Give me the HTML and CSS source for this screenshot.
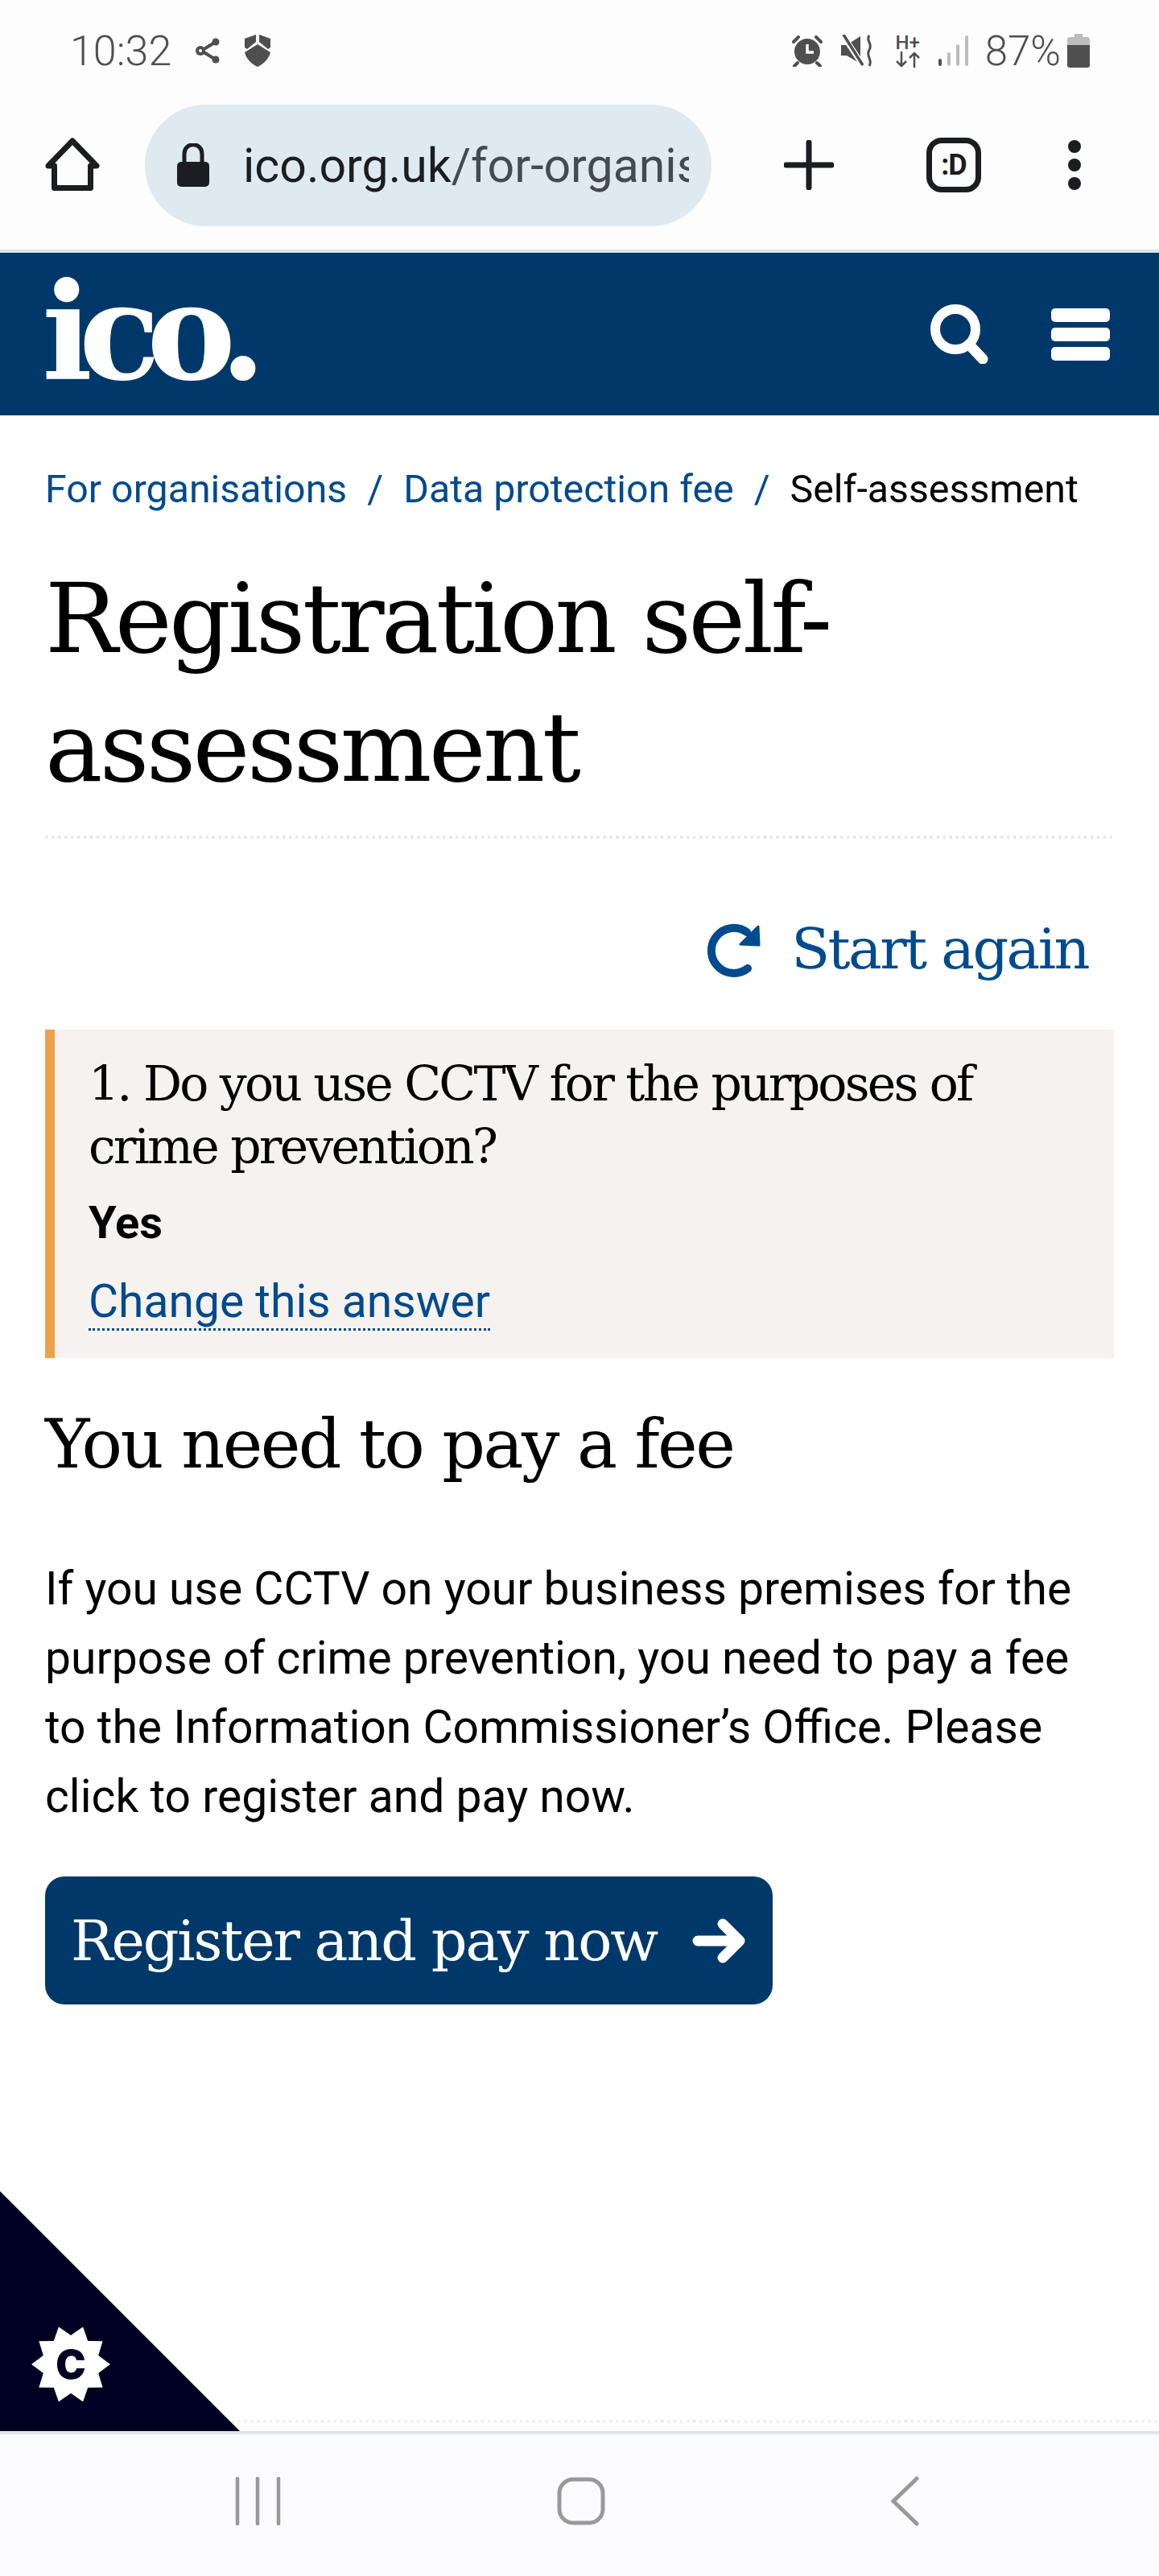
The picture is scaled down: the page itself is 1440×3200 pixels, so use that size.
FILE: index.html
```html
<!DOCTYPE html>
<html lang="en">
<head>
<meta charset="UTF-8" />
<title>Registration self-assessment</title>
<link rel="stylesheet" href="styles.css">
</head>
<body>

<div class="status-bar">
  <div class="status-left">
    <span class="status-time">10:32</span>
    <svg class="ic-share" width="32" height="32" viewBox="0 0 32 32">
      <path d="M8 16 L26 5 M8 16 L26 27" stroke="#4f4f4f" stroke-width="4" fill="none"/>
      <circle cx="7" cy="16" r="6" fill="#4f4f4f"/><circle cx="7" cy="16" r="2" fill="#fdfdfe"/>
      <circle cx="26" cy="5" r="4.5" fill="#4f4f4f"/><circle cx="26" cy="27" r="4.5" fill="#4f4f4f"/>
    </svg>
    <svg class="ic-shield" width="32" height="40" viewBox="0 0 32 40">
      <path d="M0 5 L14 0 V9 L3 18 L0 16 Z M18 0 L32 5 V16 L29 18 L18 9 Z M16 12 L32 22 C30 30 24 36 16 40 C8 36 2 30 0 22 Z" fill="#4f4f4f"/>
    </svg>
  </div>
  <div class="status-right">
    <svg class="ic-alarm" width="38" height="40" viewBox="0 0 38 40">
      <circle cx="19" cy="21" r="16" fill="#4f4f4f"/>
      <path d="M19 12 V22 H27" stroke="#fdfdfe" stroke-width="3.5" fill="none"/>
      <path d="M2 9 L8 3 M36 9 L30 3 M7 35 L3 39 M31 35 L35 39" stroke="#4f4f4f" stroke-width="4" stroke-linecap="round"/>
    </svg>
    <svg class="ic-mute" width="40" height="40" viewBox="0 0 40 40">
      <path d="M0 13 H7 L24 2 V36 L7 26 H0 Z" fill="#4f4f4f"/>
      <path d="M3 2 L27 38" stroke="#fdfdfe" stroke-width="7"/>
      <path d="M3 0 L27 38" stroke="#4f4f4f" stroke-width="3.5"/>
      <path d="M35 1 C30 7 40 11 35 19 C30 27 40 31 35 39" stroke="#4f4f4f" stroke-width="3" fill="none"/>
    </svg>
    <span class="net-type">
      <span class="net-label">H+</span>
      <svg width="32" height="20" viewBox="0 0 32 20">
        <path d="M8 0 V18 M2 12 L8 18 L14 12 M24 20 V2 M18 8 L24 2 L30 8" stroke="#4f4f4f" stroke-width="2.5" fill="none"/>
      </svg>
    </span>
    <svg class="ic-signal" width="38" height="40" viewBox="0 0 38 40">
      <rect x="0" y="30" width="4" height="9" rx="2" fill="#4f4f4f"/>
      <rect x="11" y="22" width="4" height="17" rx="2" fill="#bcbcbc"/>
      <rect x="22" y="12" width="4" height="27" rx="2" fill="#bcbcbc"/>
      <rect x="33" y="1" width="4" height="38" rx="2" fill="#bcbcbc"/>
    </svg>
    <span class="status-batt">87%</span>
    <svg class="ic-batt" width="28" height="42" viewBox="0 0 28 42">
      <path d="M9 0 H19 V4 H25 Q28 4 28 7 V14 H0 V7 Q0 4 3 4 H9 Z" fill="#bdbdbd"/>
      <path d="M0 14 H28 V39 Q28 42 25 42 H3 Q0 42 0 39 Z" fill="#4f4f4f"/>
    </svg>
  </div>
</div>

<div class="toolbar">
  <svg class="btn-home" width="72" height="72" viewBox="0 0 72 72">
    <path d="M6 37 L36 6 L66 37 H58.5 V64.5 H13.5 V37 Z" fill="none" stroke="#1b1d20" stroke-width="7" stroke-linejoin="round"/>
  </svg>
  <div class="url-pill">
    <svg class="ic-lock" width="40" height="54" viewBox="0 0 40 54">
      <path d="M9 26 V13 C9 -2 31 -2 31 13 V26" fill="none" stroke="#1b1d20" stroke-width="5"/>
      <rect x="0" y="23" width="40" height="31" rx="5" fill="#1b1d20"/>
    </svg>
    <div class="url-text"><span class="url-host">ico.org.uk</span>/for-organis</div>
  </div>
  <svg class="btn-plus" width="62" height="62" viewBox="0 0 62 62">
    <path d="M31 3 V59 M3 31 H59" stroke="#1b1d20" stroke-width="7" stroke-linecap="round"/>
  </svg>
  <div class="btn-tabs">:D</div>
  <div class="btn-menu"><i></i><i></i><i></i></div>
</div>

<header class="site-header">
  <a class="logo">ico.</a>
  <div class="header-icons">
    <svg width="74" height="74" viewBox="0 0 74 74">
      <circle cx="31" cy="31" r="25" fill="none" stroke="#fff" stroke-width="12"/>
      <path d="M48 50 L65 68" stroke="#fff" stroke-width="13" stroke-linecap="round"/>
    </svg>
    <div class="hamburger"><i></i><i></i><i></i></div>
  </div>
</header>

<main>
  <nav class="breadcrumb">
    <a>For organisations</a><span class="sep">/</span><a>Data protection fee</a><span class="sep">/</span><span class="current">Self-assessment</span>
  </nav>

  <h1>Registration self-<br>assessment</h1>

  <div class="start-again">
    <svg width="72" height="72" viewBox="0 0 72 72">
      <path d="M50 60 A28 28 0 1 1 49 15" fill="none" stroke="#004a8f" stroke-width="10" stroke-linecap="round"/>
      <path d="M63 8 L64 31 L41 30 Z" fill="#004a8f" stroke="#004a8f" stroke-width="3" stroke-linejoin="round"/>
    </svg>
    <a>Start again</a>
  </div>

  <section class="answer-box">
    <p class="question">1. Do you use CCTV for the purposes of crime prevention?</p>
    <p class="answer">Yes</p>
    <a class="change-link">Change this answer</a>
  </section>

  <h2>You need to pay a fee</h2>

  <p class="body-text">If you use CCTV on your business premises for the purpose of crime prevention, you need to pay a fee to the Information Commissioner’s Office. Please click to register and pay now.</p>

  <a class="btn-register">
    Register and pay now
    <svg width="66" height="56" viewBox="0 0 66 56">
      <path d="M7 28 H56 M38 7 L59 28 L38 49" fill="none" stroke="#fff" stroke-width="13" stroke-linecap="round" stroke-linejoin="round"/>
    </svg>
  </a>
</main>

<div class="cookie-corner">
  <svg class="cookie-badge" width="100" height="100" viewBox="-50 -50 100 100">
    <polygon fill="#fff" points="49,0 34.2,11.1 39.6,28.8 21.2,29.1 15.1,46.6 0,36 -15.1,46.6 -21.2,29.1 -39.6,28.8 -34.2,11.1 -49,0 -34.2,-11.1 -39.6,-28.8 -21.2,-29.1 -15.1,-46.6 0,-36 15.1,-46.6 21.2,-29.1 39.6,-28.8 34.2,-11.1"/>
    <text x="0" y="18" text-anchor="middle" class="cookie-c">C</text>
  </svg>
</div>

<div class="nav-bar">
  <svg width="60" height="60" viewBox="0 0 60 60">
    <path d="M3 2 V58 M28 2 V58 M54 2 V58" stroke="#999" stroke-width="4.5" stroke-linecap="round"/>
  </svg>
  <svg class="nav-home" width="60" height="60" viewBox="0 0 60 60">
    <rect x="3" y="3" width="54" height="54" rx="17" fill="none" stroke="#999" stroke-width="5"/>
  </svg>
  <svg width="36" height="62" viewBox="0 0 36 62">
    <path d="M33 3 L4 31 L33 59" fill="none" stroke="#999" stroke-width="5" stroke-linecap="round"/>
  </svg>
</div>

</body>
</html>
```

FILE: styles.css
```css
html, body {
  margin: 0;
  padding: 0;
}
body {
  height: 100vh;
  display: flex;
  flex-direction: column;
  position: relative;
  overflow: hidden;
  background: #fff;
  color: #000;
  font-family: Roboto, "Liberation Sans", sans-serif;
}
a {
  color: #004a8f;
  text-decoration: none;
}

/* phone status bar */
.status-bar {
  height: 130px;
  box-sizing: border-box;
  padding: 42px 86px 0 87px;
  display: flex;
  justify-content: space-between;
  align-items: flex-start;
  background: #fdfdfe;
  color: #4f4f4f;
}
.status-left, .status-right {
  display: flex;
  align-items: center;
  height: 42px;
}
.status-time {
  font-size: 52px;
  font-weight: 300;
  width: 155px;
}
.ic-shield {
  margin-left: 30px;
}
.ic-mute {
  margin-left: 23px;
}
.net-type {
  margin-left: 27px;
  width: 32px;
  display: flex;
  flex-direction: column;
  align-items: center;
}
.net-label {
  font-size: 24px;
  line-height: 22px;
  font-weight: 500;
}
.ic-signal {
  margin-left: 22px;
}
.status-batt {
  margin-left: 20px;
  font-size: 51px;
  font-weight: 300;
}
.ic-batt {
  margin-left: 8px;
}

/* browser toolbar */
.toolbar {
  height: 184px;
  box-sizing: border-box;
  padding: 0 0 30px 54px;
  display: flex;
  align-items: center;
  background: #fdfdfe;
  border-bottom: 4px solid #dde6ea;
}
.url-pill {
  width: 704px;
  height: 151px;
  box-sizing: border-box;
  margin-left: 54px;
  padding-left: 40px;
  display: flex;
  align-items: center;
  border-radius: 76px;
  background: #dee9f0;
}
.url-text {
  width: 554px;
  margin-left: 42px;
  overflow: hidden;
  white-space: nowrap;
  font-size: 59px;
  color: #434a50;
}
.url-host {
  color: #1b1d20;
}
.btn-plus {
  margin-left: 90px;
}
.btn-tabs {
  width: 68px;
  height: 68px;
  box-sizing: border-box;
  margin-left: 115px;
  display: flex;
  align-items: center;
  justify-content: center;
  border: 7px solid #1b1d20;
  border-radius: 19px;
  font-size: 36px;
  font-weight: 700;
  letter-spacing: -1px;
  color: #1b1d20;
}
.btn-menu {
  margin-left: 108px;
  display: flex;
  flex-direction: column;
  gap: 7px;
}
.btn-menu i {
  width: 16px;
  height: 16px;
  border-radius: 50%;
  background: #1b1d20;
}

/* site header */
.site-header {
  height: 202px;
  box-sizing: border-box;
  padding: 0 61px 0 52px;
  display: flex;
  align-items: center;
  justify-content: space-between;
  background: #00386a;
}
.logo {
  padding-bottom: 4px;
  font-family: "DejaVu Serif", serif;
  font-weight: 700;
  font-size: 166px;
  line-height: 198px;
  letter-spacing: -17px;
  color: #fff;
}
.header-icons {
  display: flex;
  align-items: center;
  gap: 76px;
}
.hamburger {
  display: flex;
  flex-direction: column;
  gap: 7px;
}
.hamburger i {
  width: 73px;
  height: 17px;
  border-radius: 5px;
  background: #fff;
}

/* page content */
main {
  flex: 1;
  padding: 0 56px;
  margin-bottom: 10px;
  border-bottom: 4px dotted #eeeeee;
}
.breadcrumb {
  margin-top: 62px;
  font-size: 48.3px;
  line-height: 60px;
  white-space: nowrap;
}
.sep {
  margin: 0 25px;
  color: #004a8f;
}
h1, h2, .question, .start-again a, .btn-register {
  font-family: "DejaVu Serif", serif;
  font-weight: 400;
}
h1 {
  margin: 51px 0 0;
  padding-bottom: 29px;
  font-size: 120px;
  line-height: 160px;
  letter-spacing: -3.7px;
  border-bottom: 4px dotted #e6e6e6;
}
.start-again {
  margin-top: 87px;
  padding-right: 32px;
  display: flex;
  justify-content: flex-end;
  align-items: center;
  gap: 32px;
  font-size: 70px;
  line-height: 100px;
  letter-spacing: -2.6px;
}
.answer-box {
  margin-top: 50px;
  height: 408px;
  box-sizing: border-box;
  padding: 28px 40px 0 42px;
  background: #f5f2ef;
  border-left: 12px solid #eca14a;
}
.answer-box p {
  margin: 0;
}
.question {
  font-size: 60px;
  line-height: 78px;
  letter-spacing: -2.8px;
}
.answer-box .answer {
  margin-top: 17px;
  font-size: 56px;
  line-height: 78px;
  font-weight: 700;
}
.change-link {
  display: inline-block;
  margin-top: 26px;
  font-size: 57px;
  line-height: 66px;
  border-bottom: 3px dotted #004a8f;
}
h2 {
  margin: 52px 0 0;
  font-size: 84px;
  line-height: 110px;
  letter-spacing: -2.6px;
}
.body-text {
  margin: 82px 0 0;
  font-size: 57px;
  line-height: 86px;
}
.btn-register {
  width: 904px;
  height: 159px;
  box-sizing: border-box;
  margin-top: 56px;
  padding: 0 34px 0 32px;
  display: flex;
  align-items: center;
  justify-content: space-between;
  border-radius: 24px;
  background: #00386a;
  color: #fff;
  font-size: 70px;
  letter-spacing: -2.2px;
}

/* cookie control tab, sits over the page corner */
.cookie-corner {
  position: absolute;
  left: 0;
  bottom: 180px;
  width: 298px;
  height: 298px;
  background: #000022;
  clip-path: polygon(0 0, 100% 100%, 0 100%);
}
.cookie-badge {
  position: absolute;
  left: 38px;
  bottom: 33px;
}
.cookie-c {
  font-family: Inter, "Liberation Sans", sans-serif;
  font-weight: 900;
  font-size: 50px;
  fill: #000022;
}

/* phone nav bar */
.nav-bar {
  height: 180px;
  box-sizing: border-box;
  border-top: 4px solid #dfe5ea;
  padding: 0 298px 10px 292px;
  display: flex;
  align-items: center;
  justify-content: space-between;
  background: #fbfbfd;
}
.nav-home {
  margin-right: 14px;
}
```
